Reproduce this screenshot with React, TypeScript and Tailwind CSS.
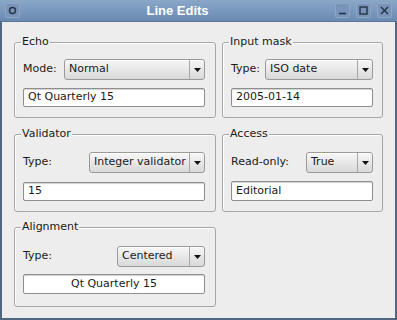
const font = { fontFamily: '"DejaVu Sans", "Noto Sans", sans-serif' };

function Combo({ value, width }: { value: string; width: string }) {
  return (
    <div
      className={`${width} h-[21px] flex items-stretch rounded-[3px] border border-[#9a9a9a] bg-gradient-to-b from-[#f7f7f7] to-[#d9d9d9] shadow-[inset_0_1px_0_#ffffff]`}
    >
      <span className="flex-1 pl-[4px] flex items-center text-[11px] text-[#1a1a1a] whitespace-nowrap overflow-hidden">
        {value}
      </span>
      <span className="w-[15px] border-l border-[#a8a8a8] flex items-center justify-center">
        <svg width="7" height="4" viewBox="0 0 7 4">
          <path d="M0 0 H7 L3.5 4 Z" fill="#111" />
        </svg>
      </span>
    </div>
  );
}

function LineEdit({ value, center, h = "h-[19px]" }: { value: string; center?: boolean; h?: string }) {
  return (
    <div
      className={`${h} w-full flex items-center rounded-[2px] border border-[#8e8e8e] bg-white shadow-[inset_0_1px_1px_#d0d0d0] px-[4px] text-[11px] text-[#1a1a1a] ${center ? "justify-center" : ""}`}
    >
      {value}
    </div>
  );
}

function Group({
  title,
  height,
  pt,
  children,
  pr,
}: {
  title: string;
  height: string;
  pt: string;
  pr: string;
  children: React.ReactNode;
}) {
  return (
    <div className={`relative ${height} rounded-[3px] border border-[#a6a6a6] shadow-[inset_1px_1px_0_#ffffff] ${pt} pl-[8px] ${pr}`}>
      <span className="absolute -top-[8px] left-[6px] px-[1px] bg-[#ededed] text-[11px] leading-[14px] text-[#1a1a1a]">
        {title}
      </span>
      {children}
    </div>
  );
}

function TitleButton({ children }: { children: React.ReactNode }) {
  return (
    <div className="w-[15px] h-[15px] rounded-[2px] border border-[#8fa7c4] bg-[#7994b8] flex items-center justify-center">
      {children}
    </div>
  );
}

export default function App() {
  return (
    <div className="w-[397px] h-[320px] flex flex-col bg-[#ededed] overflow-hidden" style={font}>
      <div className="h-[22px] shrink-0 flex items-center bg-gradient-to-b from-[#8aa7c8] to-[#6a8ab2] border-b border-[#5b7699] px-[5px]">
        <TitleButton>
          <svg width="9" height="9" viewBox="0 0 9 9">
            <circle cx="4.5" cy="4.5" r="3" fill="none" stroke="#243447" strokeWidth="1.4" />
          </svg>
        </TitleButton>
        <div
          className="flex-1 text-center text-white text-[13px] font-bold"
          style={{ fontFamily: '"Liberation Sans", Arial, sans-serif' }}
        >
          Line Edits
        </div>
        <div className="flex gap-[6px]">
          <TitleButton>
            <svg width="9" height="9" viewBox="0 0 9 9">
              <path d="M1 7.5 H8" stroke="#243447" strokeWidth="1.6" />
            </svg>
          </TitleButton>
          <TitleButton>
            <svg width="9" height="9" viewBox="0 0 9 9">
              <rect x="1" y="1" width="7" height="7" fill="none" stroke="#243447" strokeWidth="1.4" />
            </svg>
          </TitleButton>
          <TitleButton>
            <svg width="9" height="9" viewBox="0 0 9 9">
              <path d="M1 1 L8 8 M8 1 L1 8" stroke="#243447" strokeWidth="1.5" />
            </svg>
          </TitleButton>
        </div>
      </div>
      <div className="flex-1 border-x-2 border-b-2 border-[#51667f] pl-[12px] pt-[20px]">
        <div className="grid grid-cols-[202px_161px] gap-x-[6px] gap-y-[16px] text-[11px] text-[#1a1a1a]">
          <Group title="Echo" height="h-[76px]" pt="pt-[16px]" pr="pr-[10px]">
            <div className="flex items-center justify-between">
              <span>Mode:</span>
              <Combo value="Normal" width="w-[141px]" />
            </div>
            <div className="mt-[8px]">
              <LineEdit value="Qt Quarterly 15" />
            </div>
          </Group>
          <Group title="Input mask" height="h-[76px]" pt="pt-[16px]" pr="pr-[9px]">
            <div className="flex items-center justify-between">
              <span>Type:</span>
              <Combo value="ISO date" width="w-[108px]" />
            </div>
            <div className="mt-[8px]">
              <LineEdit value="2005-01-14" />
            </div>
          </Group>
          <Group title="Validator" height="h-[78px]" pt="pt-[17px]" pr="pr-[10px]">
            <div className="flex items-center justify-between">
              <span>Type:</span>
              <Combo value="Integer validator" width="w-[116px]" />
            </div>
            <div className="mt-[9px]">
              <LineEdit value="15" />
            </div>
          </Group>
          <Group title="Access" height="h-[78px]" pt="pt-[17px]" pr="pr-[9px]">
            <div className="flex items-center justify-between">
              <span>Read-only:</span>
              <Combo value="True" width="w-[67px]" />
            </div>
            <div className="mt-[8px]">
              <LineEdit value="Editorial" h="h-[20px]" />
            </div>
          </Group>
          <div className="-mt-[1px]">
            <Group title="Alignment" height="h-[80px]" pt="pt-[18px]" pr="pr-[10px]">
              <div className="flex items-center justify-between">
                <span>Type:</span>
                <Combo value="Centered" width="w-[88px]" />
              </div>
              <div className="mt-[7px]">
                <LineEdit value="Qt Quarterly 15" center h="h-[20px]" />
              </div>
            </Group>
          </div>
        </div>
      </div>
    </div>
  );
}
